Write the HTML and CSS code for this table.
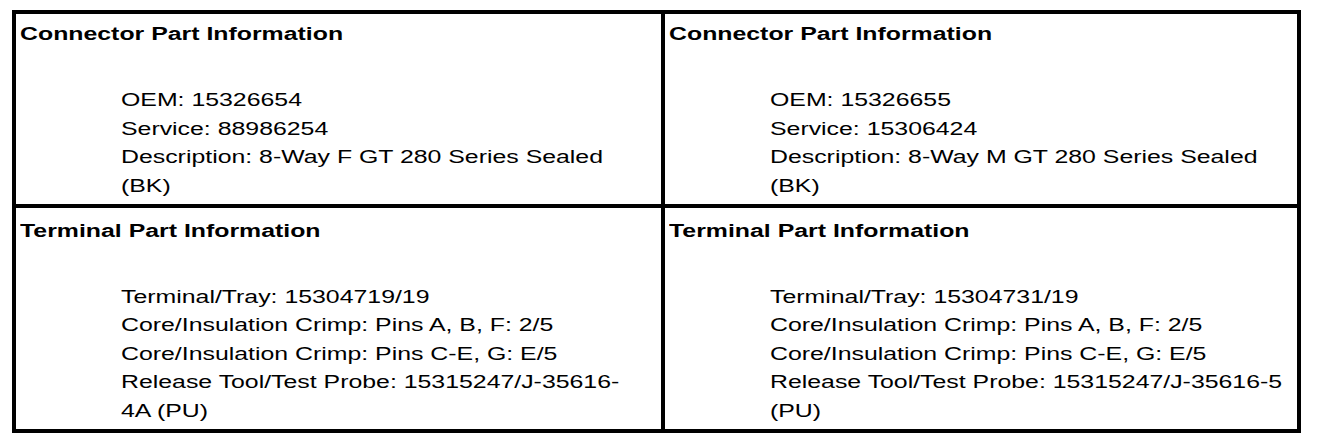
FILE: index.html
```html
<!DOCTYPE html>
<html lang="en">
<head>
<meta charset="utf-8">
<title>Connector Part Information</title>
<link rel="stylesheet" href="styles.css">
</head>
<body>
<div class="parts">
  <div class="cell">
    <div class="stretch title">Connector Part Information</div>
    <div class="body">
      <div class="stretch">
        <div class="line">OEM: 15326654</div>
        <div class="line">Service: 88986254</div>
        <div class="line">Description: 8-Way F GT 280 Series Sealed</div>
        <div class="line">(BK)</div>
      </div>
    </div>
  </div>
  <div class="cell">
    <div class="stretch title">Connector Part Information</div>
    <div class="body">
      <div class="stretch">
        <div class="line">OEM: 15326655</div>
        <div class="line">Service: 15306424</div>
        <div class="line">Description: 8-Way M GT 280 Series Sealed</div>
        <div class="line">(BK)</div>
      </div>
    </div>
  </div>
  <div class="cell cell-terminal">
    <div class="stretch title">Terminal Part Information</div>
    <div class="body">
      <div class="stretch">
        <div class="line">Terminal/Tray: 15304719/19</div>
        <div class="line">Core/Insulation Crimp: Pins A, B, F: 2/5</div>
        <div class="line">Core/Insulation Crimp: Pins C-E, G: E/5</div>
        <div class="line">Release Tool/Test Probe: 15315247/J-35616-</div>
        <div class="line">4A (PU)</div>
      </div>
    </div>
  </div>
  <div class="cell cell-terminal">
    <div class="stretch title">Terminal Part Information</div>
    <div class="body">
      <div class="stretch">
        <div class="line">Terminal/Tray: 15304731/19</div>
        <div class="line">Core/Insulation Crimp: Pins A, B, F: 2/5</div>
        <div class="line">Core/Insulation Crimp: Pins C-E, G: E/5</div>
        <div class="line">Release Tool/Test Probe: 15315247/J-35616-5</div>
        <div class="line">(PU)</div>
      </div>
    </div>
  </div>
</div>
</body>
</html>
```

FILE: styles.css
```css
html, body {
  margin: 0;
  background: #fff;
}

body {
  padding: 10px 0 0 12px;
  font-family: "Liberation Sans", Arial, sans-serif;
  font-size: 17.5px;
  line-height: 28.4px;
  color: #000;
}

.parts {
  box-sizing: border-box;
  width: 1289px;
  display: grid;
  grid-template-columns: 645px 1fr;
  gap: 4px;
  padding: 4px;
  background: #000;
}

.cell {
  background: #fff;
  padding: 6px 4px 4px 4px;
  min-width: 0;
}

.cell-terminal {
  padding-top: 8.5px;
}

.stretch {
  width: calc(100% / 1.42);
  transform: scaleX(1.42);
  transform-origin: 0 0;
}

.title {
  font-weight: bold;
}

.body {
  margin-top: 38px;
  padding-left: 101px;
}

.line {
  white-space: nowrap;
}
```
